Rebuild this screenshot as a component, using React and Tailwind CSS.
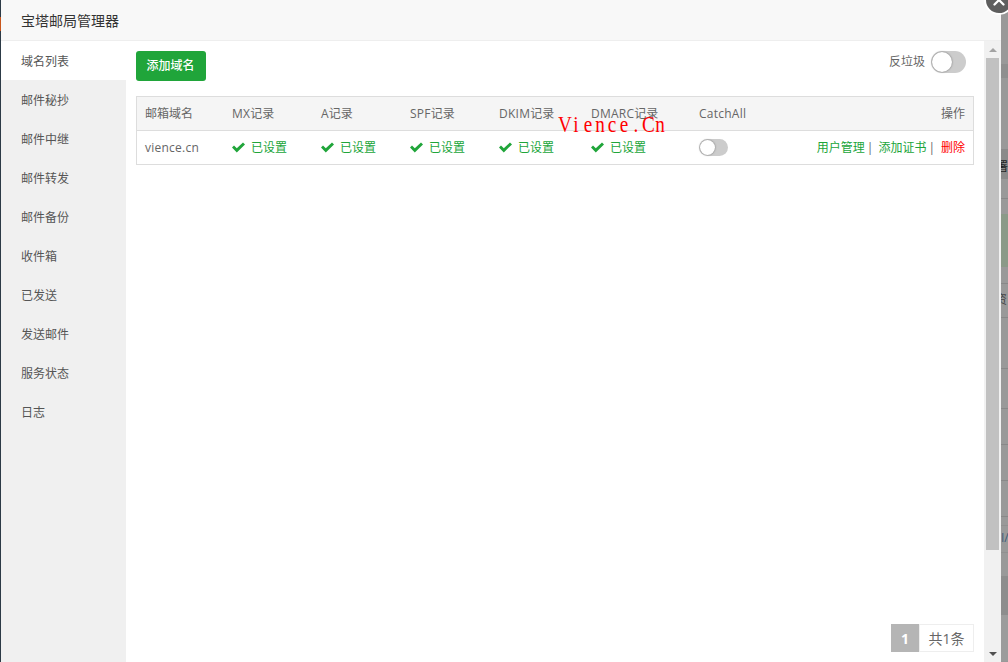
import React from 'react';
import { X } from 'lucide-react';

const menu = ['域名列表', '邮件秘抄', '邮件中继', '邮件转发', '邮件备份', '收件箱', '已发送', '发送邮件', '服务状态', '日志'];
const fontStack = { fontFamily: '"Open Sans", "Noto Sans CJK SC", sans-serif' };
const stamp = 'Vience.Cn'.split('');

function Toggle({ small }) {
  return (
    <span className={small
      ? 'flex h-[17px] w-[29px] rounded-full bg-[#cccccc] p-[1px]'
      : 'flex h-[22px] w-[35px] rounded-full bg-[#cccccc] p-[1px]'}>
      <span className={small
        ? 'h-[15px] w-[15px] rounded-full bg-white shadow-[0_0_2px_rgba(0,0,0,0.5)]'
        : 'h-[20px] w-[20px] rounded-full bg-white shadow-[0_0_2px_rgba(0,0,0,0.5)]'} />
    </span>
  );
}

function Status() {
  return (
    <span className="flex items-center gap-[6px] text-[#20a53a]">
      <svg width="13" height="11" viewBox="0 0 13 11" fill="#20a53a">
        <path d="M0 5.6 L2 3.6 L4.8 6.2 L11 0.4 L13 2.4 L4.8 10.4 Z" />
      </svg>
      已设置
    </span>
  );
}

// latin runs in the reference are a little wider than Open Sans at 12px
function Latin({ children }) {
  return <span className="tracking-[0.25px]">{children}</span>;
}

// sliver of the page behind the dialog, visible on the right
function PageSliver() {
  return (
    <div className="flex h-[662px] w-[7px] shrink-0 flex-col overflow-hidden bg-[#999999] text-[12px] leading-none text-[#222222]">
      <div className="h-[64px] shrink-0" />
      <div className="h-[14px] shrink-0 bg-[#8f8f8f]" />
      <div className="h-[71px] shrink-0" />
      <div className="flex h-[30px] shrink-0 items-center bg-[#8a8a8a] pt-[6px]"><span className="-ml-[5px]">署</span></div>
      <div className="h-[20px] shrink-0 border-b border-[#888888]" />
      <div className="h-[15px] shrink-0" />
      <div className="h-[53px] shrink-0 bg-[#8a9a88]" />
      <div className="h-[17px] shrink-0 border-b border-[#888888]" />
      <div className="flex h-[34px] shrink-0 items-center border-b border-[#888888] pb-[2px] text-[#444444]"><span className="-ml-[6px]">资</span></div>
      <div className="h-[51px] shrink-0 border-b border-[#888888]" />
      <div className="h-[40px] shrink-0 border-b border-[#888888]" />
      <div className="h-[36px] shrink-0 border-b border-[#888888]" />
      <div className="h-[36px] shrink-0 border-b border-[#888888]" />
      <div className="h-[36px] shrink-0 border-b border-[#888888]" />
      <div className="h-[9px] shrink-0 border-b border-[#909090]" />
      <div className="flex h-[27px] shrink-0 items-center border-b border-[#909090] pb-[2px] text-[#3d5a78]"><span>I/</span></div>
      <div className="h-[23px] shrink-0" />
      <div className="h-[39px] shrink-0 bg-[#8d8d8d]" />
      <div className="h-[46px] shrink-0 bg-[#9c9c9c]" />
    </div>
  );
}

export default function App() {
  return (
    <div style={fontStack} className="relative flex h-[662px] w-[1008px] overflow-hidden bg-[#999999] text-[12px] text-[#666666]">
      {/* dark page edge behind the dialog */}
      <div className="flex w-px flex-col bg-[#2c3a46]">
        <div className="mt-[17px] h-[14px] bg-[#c8561c]" />
      </div>

      <div className="flex w-[1000px] flex-col bg-white">
        <div className="flex h-[41px] shrink-0 items-center border-b border-[#eeeeee] bg-[#f8f8f8] pl-[20px] text-[14px] text-[#333333]">
          宝塔邮局管理器
        </div>
        <div className="flex min-h-0 flex-1">
          <div className="flex w-[125px] shrink-0 flex-col bg-[#f0f0f0]">
            {menu.map((item, i) => (
              <div key={item} className={i === 0
                ? 'flex h-[39px] items-center bg-white pl-[20px] pt-[2px] text-[#555555]'
                : 'flex h-[39px] items-center pl-[20px] pt-[2px] text-[#555555]'}>
                {item}
              </div>
            ))}
          </div>

          <div className="flex min-w-0 flex-1 flex-col p-[10px]">
            <div className="flex items-start justify-between">
              <button className="h-[30px] w-[70px] rounded-[3px] bg-[#20a53a] pr-[1px] font-medium text-white">添加域名</button>
              <div className="mr-[8px] flex items-center gap-[6px] text-[#666666]">
                反垃圾
                <Toggle />
              </div>
            </div>

            <div className="relative mt-[15px] border border-[#dddddd]">
              <div className="grid h-[34px] grid-cols-[87px_89px_89px_89px_92px_108px_1fr] items-center border-b border-[#dddddd] bg-[#f5f5f5] px-[8px]">
                <span>邮箱域名</span>
                <span><Latin>MX</Latin>记录</span>
                <span><Latin>A</Latin>记录</span>
                <span><Latin>SPF</Latin>记录</span>
                <span><Latin>DKIM</Latin>记录</span>
                <span><Latin>DMARC</Latin>记录</span>
                <div className="flex justify-between">
                  <Latin>CatchAll</Latin>
                  <span>操作</span>
                </div>
              </div>
              <div className="grid h-[33px] grid-cols-[87px_89px_89px_89px_92px_108px_1fr] items-center px-[8px]">
                <Latin>vience.cn</Latin>
                <Status />
                <Status />
                <Status />
                <Status />
                <Status />
                <div className="flex items-center justify-between">
                  <Toggle small />
                  <span className="flex text-[#666666]">
                    <a className="text-[#20a53a]">用户管理</a>
                    <span className="ml-[2px] mr-[5px]">|</span>
                    <a className="text-[#20a53a]">添加证书</a>
                    <span className="ml-[2px] mr-[6px]">|</span>
                    <a className="text-[#ff0000]">删除</a>
                  </span>
                </div>
              </div>
              {/* watermark stamped over the table */}
              <span className="absolute left-[421px] top-[12px] flex origin-left scale-x-[0.8] font-['Liberation_Serif',serif] text-[24px] leading-[30px] text-[#ff0000]">
                {stamp.map((c, i) => (
                  <span key={i} className="w-[15px] text-center">{c}</span>
                ))}
              </span>
            </div>

            <div className="mt-auto flex justify-end">
              <span className="flex h-[28px] w-[28px] items-center justify-center bg-[#b5b5b5] text-[14px] font-bold text-white">1</span>
              <span className="flex h-[28px] w-[55px] items-center justify-center border border-[#eeeeee] text-[14px] text-[#666666]">共1条</span>
            </div>
          </div>

          {/* scrollbar */}
          <div className="flex w-[17px] shrink-0 flex-col items-center bg-[#f1f1f1]">
            <div className="flex h-[17px] w-full items-center justify-center">
              <span className="border-x-[4px] border-b-[4px] border-x-transparent border-b-[#a3a3a3]" />
            </div>
            <div className="h-[492px] w-[13px] bg-[#c1c1c1]" />
            <div className="mt-auto flex h-[17px] w-full items-center justify-center">
              <span className="border-x-[4px] border-t-[4px] border-x-transparent border-t-[#505050]" />
            </div>
          </div>
        </div>
      </div>

      <PageSliver />

      {/* close button of the dialog */}
      <div className="absolute left-[984px] top-[-15px] flex h-[30px] w-[30px] items-center justify-center rounded-full border-[2px] border-white bg-[#5e5e5e] text-white">
        <X className="h-[18px] w-[18px]" strokeWidth={3} />
      </div>
    </div>
  );
}
